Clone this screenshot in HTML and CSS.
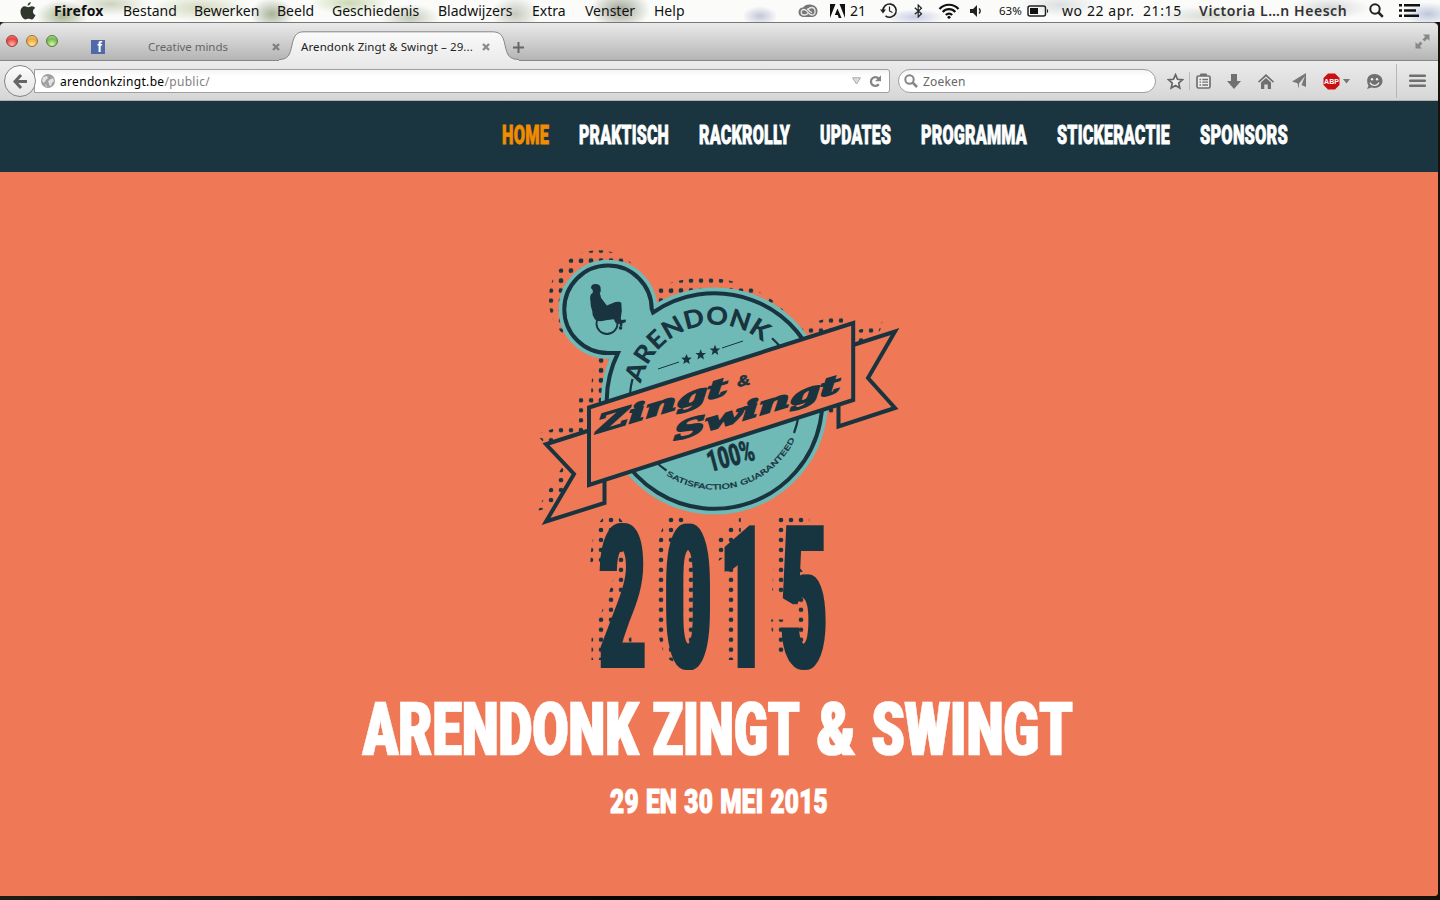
FILE: index.html
```html
<!DOCTYPE html>
<html lang="nl">
<head>
<meta charset="utf-8">
<title>Arendonk Zingt &amp; Swingt – 29 en 30 mei 2015</title>
<link rel="stylesheet" href="styles.css">
</head>
<body>
<div class="screen">
  <div class="menubar">
    <svg class="apple" viewBox="0 0 16 18"><path d="M10.8 0c.1 1.700-1.500 3.700-3.200 3.700C7.400 2 9 .2 10.800 0zM13 9.400c0 2 1 2.900 2.500 3.500-.7 2-2.200 4.600-4 4.600-1.200 0-1.600-.7-3-.7s-1.900.7-3 .7C3.200 17.500.500 13.500.500 9.800c0-3.600 2.200-5.500 4.400-5.500 1.400 0 2.500.9 3.400.9s2-.9 3.700-.9c1.300 0 2.500.7 3.200 1.700C13.700 6.900 13 8 13 9.400z" fill="#30362c"/></svg>
    <div class="menus">
      <b>Firefox</b><span>Bestand</span><span>Bewerken</span><span>Beeld</span><span>Geschiedenis</span><span>Bladwijzers</span><span>Extra</span><span>Venster</span><span>Help</span>
    </div>
    <div class="status">
      <svg width="20" height="14" viewBox="0 0 20 14" fill="none"><path d="M6 13C2 13 .5 10.500.500 8S2.500 3.500 5 3.500C6.500 1.500 8.500.500 11 .500c5 0 8.500 2.500 8.500 6.500 0 3.500-2 6-6 6z" fill="#777"/><path d="M10 9.500C8.500 11 7.500 11 6 11 2.500 11 2 5.500 6 5.500c3.500 0 4 5.500 8 5.500 4.500 0 4-7.500-.5-7.500-2 0-3 1.500-4 2.500M9 5c2 .5 2.500 3.500 5 3.500" stroke="#e8e8e8" stroke-width="1.300"/></svg>
      <svg class="adobe" width="15" height="14" viewBox="0 0 15 14"><path d="M0 0h5.500L0 14zM9.500 0H15v14zM7.500 4.500L11.500 14H8.800L7.700 11H4.800z" fill="#111"/></svg>
      <span class="adobe-count">21</span>
      <svg class="tm" width="18" height="17" viewBox="0 0 18 17" fill="none" stroke="#222" stroke-width="1.700"><path d="M3 9a6.600 6.600 0 1 1 2.500 4.800"/><path d="M9.500 4.500v4.500l3 1.500" stroke-width="1.200"/><path d="M0 7.500h6L3 11.500z" fill="#222" stroke="none"/></svg>
      <svg class="bt" width="9" height="14" viewBox="0 0 9 14" fill="none" stroke="#222" stroke-width="1.200"><path d="M.8 3.800l6.700 6L4.200 13V1l3.300 3.200-6.700 6"/></svg>
      <svg class="wifi" width="22" height="16" viewBox="0 0 22 16" fill="none" stroke="#111" stroke-width="2.200"><path d="M1.500 6C6.500.300 15.500.300 20.500 6M4.700 9c3.500-3.800 9.100-3.800 12.600 0M7.800 12c1.800-1.900 4.600-1.900 6.400 0"/><circle cx="11" cy="14.200" r="1.500" fill="#111" stroke="none"/></svg>
      <svg class="vol" width="13" height="12" viewBox="0 0 13 12"><path d="M0 4h3l4-4v12L3 8H0z" fill="#222"/><path d="M9 3.500c1.400 1.500 1.400 3.500 0 5" stroke="#222" stroke-width="1.400" fill="none"/></svg>
      <span class="pct">63%</span>
      <svg class="bat" width="22" height="12" viewBox="0 0 22 12"><rect x="1" y="1" width="17.500" height="10" rx="2" fill="none" stroke="#222" stroke-width="1.500"/><rect x="3" y="3" width="8" height="6" fill="#111"/><path d="M20 4c1.600.5 1.600 3.500 0 4z" fill="#222"/></svg>
      <span class="clock">wo 22 apr.&nbsp; 21:15</span>
      <b class="user">Victoria L…n Heesch</b>
      <svg class="spot" width="15" height="15" viewBox="0 0 15 15" fill="none" stroke="#222"><circle cx="6" cy="6" r="4.700" stroke-width="2"/><path d="M9.500 9.500l4.300 4.300" stroke-width="2.500"/></svg>
      <svg class="list" width="22" height="14" viewBox="0 0 22 14" fill="#111"><path d="M0 0h3v2.600H0zM0 5.200h3v2.600H0zM0 10.400h3V13H0zM5 0h16v2.600H5zM5 5.200h12v2.600H5zM5 10.400h15V13H5z"/></svg>
    </div>
  </div>

  <div class="window">
    <div class="titlebar">
      <div class="lights"><i class="red"></i><i class="amber"></i><i class="green"></i></div>
      <div class="fb">f</div>
      <span class="tab-idle">Creative minds</span>
      <svg class="close" viewBox="0 0 8 8"><path d="M1 1l6 6M7 1L1 7" stroke="#808080" stroke-width="2.400"/></svg>
      <div class="tab">
        <svg class="tab-shape" width="240" height="30" viewBox="0 0 240 30"><defs><linearGradient id="tabFill" x1="0" y1="0" x2="0" y2="1"><stop offset="0" stop-color="#fafafa"/><stop offset="1" stop-color="#ebebeb"/></linearGradient></defs><path d="M0 28.500C9 28.500 11 24 13 14 15 4 18 .800 25 .800H213C221 .800 224 4 226 14 228 24 230 28.500 240 28.500V30H0z" fill="url(#tabFill)"/><path d="M0 28.500C9 28.500 11 24 13 14 15 4 18 .800 25 .800H213C221 .800 224 4 226 14 228 24 230 28.500 240 28.500" fill="none" stroke="#868686"/></svg>
        <span class="tab-title">Arendonk Zingt &amp; Swingt – 29...</span>
        <svg class="close" viewBox="0 0 8 8"><path d="M1 1l6 6M7 1L1 7" stroke="#8c8c8c" stroke-width="2.400"/></svg>
      </div>
      <svg class="plus" width="11" height="11" viewBox="0 0 11 11"><path d="M5.500 0v11M0 5.500h11" stroke="#666" stroke-width="2"/></svg>
      <svg class="full" width="15" height="15" viewBox="0 0 15 15" fill="#888"><path d="M8 .500h6.500V7L12.300 4.800 9.600 7.500 7.500 5.400l2.700-2.700zM.500 8v6.500H7l-2.200-2.200L7.500 9.600 5.400 7.500 2.700 10.200z"/></svg>
    </div>

    <div class="toolbar">
      <div class="back"><svg width="15" height="15" viewBox="0 0 15 15" fill="none" stroke="#666" stroke-width="3"><path d="M8 1L2 7.500 8 14M2.500 7.500H14"/></svg></div>
      <div class="url">
        <svg width="14" height="14" viewBox="0 0 14 14"><circle cx="7" cy="7" r="7" fill="#a0a0a0"/><path d="M2 3l4-1 1 2-2 2-2 3L1 7zM8 6l4-2 1 3-2 2-1 3-2-1V9L7 8zM4 10l2 2-1 1z" fill="#e2e2e2"/></svg>
        <span class="address">arendonkzingt.be<em>/public/</em></span>
        <svg class="drop" width="9" height="8" viewBox="0 0 9 8"><path d="M.5.800h8L4.500 7z" fill="#ddd" stroke="#aaa"/></svg>
        <svg width="13" height="13" viewBox="0 0 13 13"><path d="M9.800 9.300A4.400 4.400 0 1 1 9.600 3.600" fill="none" stroke="#858585" stroke-width="2.300"/><path d="M12 .300v6H6z" fill="#858585"/></svg>
      </div>
      <div class="search">
        <svg width="14" height="14" viewBox="0 0 14 14" fill="none" stroke="#858585" stroke-width="2"><circle cx="5.500" cy="5.500" r="4.200"/><path d="M8.700 8.700L13 13" stroke-width="2.600"/></svg>
        <span>Zoeken</span>
      </div>
      <svg class="ic star" width="17" height="17" viewBox="0 0 17 17"><path d="M8.500 1.700l2 4.600 5 .5-3.800 3.300 1.100 4.900-4.300-2.600L4.200 15l1.100-4.900L1.500 6.800l5-.5z" fill="#eee" stroke="#666" stroke-width="1.700"/></svg>
      <i class="sep"></i>
      <svg class="ic lib" width="15" height="16" viewBox="0 0 15 16"><rect x="1" y="3" width="13" height="12" rx="1.500" fill="#eee" stroke="#707070" stroke-width="1.700"/><path d="M4 3V1.500Q4 .500 5 .500h5q1 0 1 1V3z" fill="#707070"/><path d="M3.500 6.500H5M6.300 6.500H12M3.500 9.200H5M6.300 9.200H12M3.500 12H5M6.300 12H12" stroke="#707070" stroke-width="1.300"/></svg>
      <svg class="ic down" width="14" height="15" viewBox="0 0 14 15"><path d="M4 0h6v7h4l-7 8-7-8h4z" fill="#707070"/></svg>
      <svg class="ic home" width="16" height="15" viewBox="0 0 16 15" fill="#707070"><path d="M8 0l8 7.500-1 1.200L8 2.400 1 8.700 0 7.500z"/><path d="M3 8.500l5-4.400 5 4.400V15H9.700v-4.500H6.300V15H3z"/></svg>
      <svg class="ic send" width="15" height="16" viewBox="0 0 15 16" fill="#777"><path d="M14 0v14l-4.500-2L13 3 7 10.500V16L5.500 10.300 0 8.500z"/></svg>
      <div class="abp"><svg width="17" height="17" viewBox="0 0 17 17"><path d="M5 .500h7L16.500 5v7L12 16.500H5L.500 12V5z" fill="#c90f0f"/></svg><b>ABP</b></div>
      <svg class="caret" width="7" height="5" viewBox="0 0 7 5"><path d="M0 0h7L3.500 4.500z" fill="#777"/></svg>
      <svg class="ic chat" width="17" height="15" viewBox="0 0 17 15"><path d="M8.500 0C13 0 16.500 3 16.500 7s-3.500 7-8 7c-1.200 0-2-.2-3-.5L1 15l1.500-3.200C-.5 6.500 1.500 0 8.500 0z" fill="#707070"/><circle cx="6" cy="5.200" r="1.200" fill="#eee"/><circle cx="11" cy="5.200" r="1.200" fill="#eee"/><path d="M4 8.500q1.500 3 4.500 3t4.500-3" fill="none" stroke="#eee" stroke-width="1.200"/></svg>
      <i class="sep tall"></i>
      <svg class="burger" width="17" height="14" viewBox="0 0 17 14"><path d="M1.200 1.700h14.600M1.200 6.700h14.600M1.200 11.700h14.600" stroke="#707070" stroke-width="2.600" stroke-linecap="round"/></svg>
    </div>

    <div class="site">
      <svg class="defs" width="0" height="0"><filter id="heavy" x="-5%" width="110%"><feMorphology operator="dilate" radius="1 0"/></filter></svg>
      <nav class="nav">
        <a class="on"><svg width="47" height="30"><text x="0" y="24" textLength="47" lengthAdjust="spacingAndGlyphs">HOME</text></svg></a>
        <a><svg width="90" height="30"><text x="0" y="24" textLength="90" lengthAdjust="spacingAndGlyphs">PRAKTISCH</text></svg></a>
        <a><svg width="91" height="30"><text x="0" y="24" textLength="91" lengthAdjust="spacingAndGlyphs">RACKROLLY</text></svg></a>
        <a><svg width="71" height="30"><text x="0" y="24" textLength="71" lengthAdjust="spacingAndGlyphs">UPDATES</text></svg></a>
        <a><svg width="106" height="30"><text x="0" y="24" textLength="106" lengthAdjust="spacingAndGlyphs">PROGRAMMA</text></svg></a>
        <a><svg width="113" height="30"><text x="0" y="24" textLength="113" lengthAdjust="spacingAndGlyphs">STICKERACTIE</text></svg></a>
        <a><svg width="88" height="30"><text x="0" y="24" textLength="88" lengthAdjust="spacingAndGlyphs">SPONSORS</text></svg></a>
      </nav>
      <main class="hero">
        <svg class="logo" width="380" height="440" viewBox="530 240 380 440">
          <defs>
            <pattern id="dots" patternUnits="userSpaceOnUse" x="566" y="255.700" width="10" height="9.974"><circle cx="5" cy="5" r="2.350" fill="#19343f"/></pattern>
            <path id="badge" d="M653 312.500A107.800 107.800 0 1 1 618 353H608A43.700 43.700 0 1 1 651.700 309z"/>
            <path id="tailL" d="M589 430.500L546 444.300 574 474 546 521.500 604.500 503V478z"/>
            <path id="tailR" d="M853 345L895 331.500 868 378 895 408 838.500 426.500V403z"/>
            <path id="band" d="M589 407.500L853.200 323V400L589 485z"/>
            <path id="arcTop" d="M641 383.600A75.600 75.600 0 0 1 790.300 400.500"/>
            <path id="arcBottom" d="M666.200 475.100A89 89 0 0 0 803.700 400.500"/>
            <path id="starShape" d="M0-5.600L1.500-1.900 5.300-1.700 2.300.8 3.300 4.600 0 2.400-3.300 4.600-2.300.8-5.300-1.700-1.500-1.900z"/>
            <filter id="heavyYear" x="-10%" width="120%"><feMorphology operator="dilate" radius="6 0"/></filter>
            <clipPath id="yearClip"><text class="year" transform="scale(.4 1)" x="1470 1632 1770 1920" y="660">2015</text></clipPath>
          </defs>
          <g transform="translate(-10 -9.974)" fill="url(#dots)">
            <use href="#badge" stroke="url(#dots)" stroke-width="11"/><use href="#tailL"/><use href="#tailR"/><use href="#band"/>
          </g>
          <use href="#badge" fill="#6fbab6" stroke="#6fbab6" stroke-width="11.500"/>
          <use href="#badge" fill="none" stroke="#19343f" stroke-width="4"/>
          <path d="M772 338.200A85 85 0 0 1 780 346.500M632.500 379A85 85 0 0 0 630 394M656 462A85 85 0 0 0 666.500 470.500M794 433A85 85 0 0 0 798.500 416" fill="none" stroke="#19343f" stroke-width="2.200"/>
          <path d="M658 369l21-7M722 348l21-7" stroke="#19343f" stroke-width="1"/>
          <g fill="#19343f"><use href="#starShape" x="686.500" y="359.500"/><use href="#starShape" x="700.700" y="354.800"/><use href="#starShape" x="715" y="350.300"/></g>
          <text class="arc-name"><textPath href="#arcTop" textLength="154" lengthAdjust="spacingAndGlyphs">ARENDONK</textPath></text>
          <text class="arc-small"><textPath href="#arcBottom" textLength="151" lengthAdjust="spacingAndGlyphs">SATISFACTION GUARANTEED</textPath></text>
          <text class="hundred" transform="translate(710 472) rotate(-15)" textLength="48" lengthAdjust="spacingAndGlyphs">100%</text>
          <g fill="#ef7957" stroke="#19343f" stroke-width="4"><use href="#tailL"/><use href="#tailR"/><use href="#band"/></g>
          <g class="script">
            <text transform="matrix(1 -.3 0 1 597 433)" textLength="130" lengthAdjust="spacingAndGlyphs">Zingt</text>
            <text class="amp" transform="matrix(1 -.2 0 1 737 387)" textLength="13" lengthAdjust="spacingAndGlyphs">&amp;</text>
            <text transform="matrix(1 -.3 0 1 674 441)" textLength="166" lengthAdjust="spacingAndGlyphs">Swingt</text>
          </g>
          <g fill="#19343f">
            <path d="M591 288q0-4 4.500-4 4 0 5 3l.3 4-1 2.500q1 2 1 4l6 8 8.500-3.500q5-1 6 1l.5 8-1 7 .5 2 4.500-.5v2.500l-3.500 1.500v3h-2.500v-2.500l-4-.8-2-4-8 1q-8 2.500-11-1-3-4-2.500-8-2-5-1.800-9.500-1-5 .5-7.500l1.800-1.500v-2.500z"/>
            <circle cx="607" cy="323.500" r="10.500" fill="none" stroke="#19343f" stroke-width="1.800"/><circle cx="620.500" cy="328" r="1.800"/>
          </g>
          <rect x="580" y="510" width="260" height="160" fill="url(#dots)" clip-path="url(#yearClip)"/>
          <text class="year" filter="url(#heavyYear)" transform="scale(.4 1)" x="1498 1662 1800 1951" y="668">2015</text>
        </svg>
        <h1><svg width="720" height="80"><text x="4" y="63" textLength="276" lengthAdjust="spacingAndGlyphs">ARENDONK</text> <text x="294" y="63" textLength="147" lengthAdjust="spacingAndGlyphs">ZINGT</text> <text x="458" y="63" textLength="39" lengthAdjust="spacingAndGlyphs">&amp;</text> <text x="513" y="63" textLength="201" lengthAdjust="spacingAndGlyphs">SWINGT</text></svg></h1>
        <h2><svg width="222" height="40"><text x="2" y="31" textLength="218" lengthAdjust="spacingAndGlyphs">29 EN 30 MEI 2015</text></svg></h2>
      </main>
    </div>
  </div>
</div>
</body>
</html>
```
FILE: styles.css
```css
* { box-sizing: border-box; }
body { margin: 0; background: #0b0a08; font-family: "Noto Sans", "Open Sans", sans-serif; }
svg { display: block; flex: none; }
.screen { width: 1440px; height: 900px; overflow: hidden; background: linear-gradient(90deg, #1d1d15, #0a0a08 25%, #050403 60%, #17130c); }
.menubar { height: 22px; display: flex; align-items: center; padding: 0 0 1px 20px; font-size: 14px; color: #111; white-space: nowrap;
  background:
    radial-gradient(ellipse 26px 16px at 62px 16px, #a9b795 0, transparent 100%),
    radial-gradient(ellipse 40px 12px at 110px 4px, #cdd3bd 0, transparent 100%),
    radial-gradient(ellipse 50px 14px at 200px 8px, #d3d9bf 0, transparent 100%),
    radial-gradient(ellipse 22px 16px at 272px 14px, #a9b29a 0, transparent 100%),
    radial-gradient(ellipse 40px 12px at 350px 3px, #ccd8b4 0, transparent 100%),
    radial-gradient(ellipse 30px 14px at 410px 18px, #c3c9b8 0, transparent 100%),
    radial-gradient(ellipse 24px 18px at 515px 14px, #c4c9bd 0, transparent 100%),
    radial-gradient(ellipse 30px 20px at 620px 10px, #9fa595 0, transparent 100%),
    radial-gradient(ellipse 18px 10px at 760px 16px, #c2c6d8 0, transparent 100%),
    radial-gradient(ellipse 30px 8px at 915px 17px, #c9cde4 0, transparent 100%),
    radial-gradient(ellipse 40px 12px at 1060px 5px, #dcdfe0 0, transparent 100%),
    radial-gradient(ellipse 60px 10px at 1210px 16px, #d8dbd6 0, transparent 100%),
    radial-gradient(ellipse 40px 12px at 1330px 8px, #d6d8d8 0, transparent 100%),
    radial-gradient(ellipse 26px 12px at 1428px 14px, #bfc6dc 0, transparent 100%),
    #fbfcfa; }
.apple { width: 16px; height: 18px; margin-right: 18px; }
.menus { display: grid; grid-template-columns: 69px 71px 83px 55px 106px 94px 53px 69px 40px; width: 640px; }
.menus b { letter-spacing: .2px; }
.status { display: flex; align-items: center; flex: 1; padding-left: 104px; }
.adobe { margin-left: 12px; }
.adobe-count { width: 16px; margin-left: 5px; }
.tm { margin-left: 14px; }
.bt { margin-left: 16px; }
.wifi { margin-left: 15px; }
.vol { margin-left: 10px; }
.pct { font-size: 11.500px; width: 24px; margin-left: 16px; }
.bat { margin-left: 4px; }
.clock { width: 121px; margin-left: 13px; letter-spacing: .6px; }
.user { width: 150px; margin-left: 16px; color: #333; font-weight: 600; letter-spacing: .55px; }
.spot { margin-left: 20px; }
.list { margin-left: 15px; }

.window { width: 1438px; height: 874px; border-radius: 5px 5px 4px 0; overflow: hidden; background: #ef7957; border-top: 1px solid #777; }
.titlebar { height: 38px; display: flex; align-items: center; padding: 0 8px 0 6px; background: linear-gradient(#eaeaea, #d3d3d3 45%, #b4b4b4); border-bottom: 1px solid #868686; font-size: 11.500px; white-space: nowrap; }
.lights { display: flex; gap: 8px; width: 85px; margin-top: -2px; }
.lights i { width: 12px; height: 12px; border-radius: 50%; border: 1px solid #777; }
.lights .red { background: radial-gradient(circle at 50% 85%, #ffb6ae, #e8413c 60%, #e99); border-color: #95423f; }
.lights .amber { background: radial-gradient(circle at 50% 85%, #ffe69a, #eba43c 60%, #f8dca0); border-color: #96703a; }
.lights .green { background: radial-gradient(circle at 50% 85%, #d6f7a8, #74b750 60%, #cbe8b8); border-color: #527e3c; }
.fb { width: 14px; height: 14px; margin-top: 10px; background: #5069a8; color: #fff; font: bold 14px/15px "Liberation Sans", sans-serif; text-align: right; padding-right: 3px; }
.tab-idle { width: 124px; margin: 10px 0 0 43px; color: #666; letter-spacing: -.05px; }
.close { width: 8px; height: 8px; margin-top: 10px; }
.tab { position: relative; width: 240px; height: 30px; align-self: flex-end; margin: 0 0 -1px -1px; display: flex; align-items: center; padding: 1px 0 0 22px; color: #222; }
.tab-shape { position: absolute; left: 0; top: 0; }
.tab-title { position: relative; width: 181px; letter-spacing: .1px; }
.tab .close { position: relative; margin-top: 0; }
.plus { margin: 12px auto 0 -6px; }
.full { margin-top: 0; }

.toolbar { height: 40px; display: flex; align-items: center; padding: 1px 0 0 4px; background: linear-gradient(#ebebeb, #d6d6d6); border-bottom: 1px solid #b0b0b0; font-size: 12px; }
.back { position: relative; z-index: 1; width: 32px; height: 32px; border-radius: 50%; border: 1px solid #858585; background: linear-gradient(#fcfcfc, #e4e4e4); display: flex; align-items: center; justify-content: center; }
.url { width: 856px; height: 24px; margin-left: -2px; display: flex; align-items: center; padding: 0 7px 0 6px; background: linear-gradient(#f5f5f5, #fff 30%); border: 1px solid #a0a0a0; border-radius: 0 3px 3px 0; }
.address { flex: 1; margin-left: 5px; color: #000; letter-spacing: .32px; }
.address em { font-style: normal; color: #808080; }
.drop { margin-right: 8px; }
.search { width: 258px; height: 24px; margin-left: 8px; display: flex; align-items: center; gap: 5px; padding-left: 5px; background: linear-gradient(#f5f5f5, #fff 30%); border: 1px solid #a0a0a0; border-radius: 12px; color: #666; letter-spacing: .2px; }
.star { margin-left: 11px; }
.sep { width: 1px; height: 18px; background: #bbb; margin: 0 6px 0 5px; }
.down { margin-left: 16px; }
.home { margin-left: 17px; }
.send { margin-left: 18px; }
.abp { position: relative; width: 17px; height: 17px; margin-left: 16px; }
.abp b { position: absolute; left: 0; top: 0; width: 17px; text-align: center; color: #fff; font: bold 7px/17px "Liberation Sans", sans-serif; }
.caret { margin-left: 3px; }
.chat { margin-left: 16px; }
.sep.tall { height: 34px; background: #b4b8bc; margin: 0 12px 0 13px; }

.site { height: 796px; background: #ef7957; font-family: Roboto, "Liberation Sans", sans-serif; }
.defs { position: absolute; }
.nav { height: 71px; background: #1a353f; display: flex; gap: 30px; padding: 19px 150px 0 0; justify-content: flex-end; }
.nav svg, h1 svg, h2 svg { overflow: visible; }
.nav text { font-size: 25px; font-weight: 900; letter-spacing: .3px; fill: #fff; stroke: #fff; stroke-width: .8px; }
.nav .on text { fill: #f28d00; stroke: #f28d00; }
.hero { display: flex; flex-direction: column; align-items: center; padding-top: 68px; }
.logo { margin-left: 2px; }
.arc-name { font: 900 25px "Lato", sans-serif; fill: #19343f; }
.arc-small { font: 7px "DejaVu Sans", sans-serif; fill: #19343f; stroke: #19343f; stroke-width: .3px; }
.hundred { font: 900 30px Roboto, "Liberation Sans", sans-serif; fill: #19343f; stroke: #19343f; stroke-width: .5px; }
.script { font: italic bold 24px "DejaVu Serif", serif; fill: #19343f; stroke: #19343f; stroke-width: 1.800px; }
.script .amp { font: bold 15px "Liberation Sans", sans-serif; stroke-width: .7px; }
.year { font: 900 201px Roboto, "Liberation Sans", sans-serif; fill: #19343f; }
h1, h2 { margin: 0; }
h1 { margin-top: 12px; }
h1 text { font-size: 74px; font-weight: 900; fill: #fff; letter-spacing: 1px; stroke: #fff; stroke-width: .5px; filter: url(#heavy); }
h2 { margin-top: 10px; }
h2 text { font-size: 33px; font-weight: 900; fill: #fff; letter-spacing: .4px; word-spacing: 1px; stroke: #fff; stroke-width: 1.200px; }
```
